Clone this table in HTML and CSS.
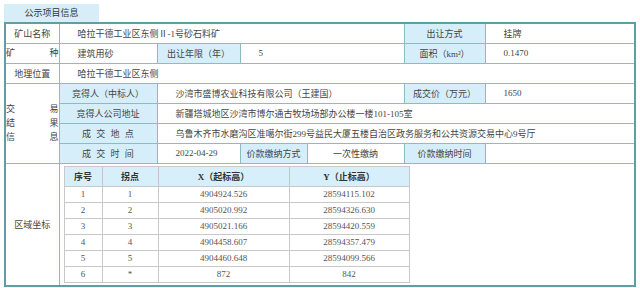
FILE: index.html
```html
<!DOCTYPE html>
<html lang="zh-CN">
<head>
    <meta charset="UTF-8">
    <title>公示项目信息</title>
    <link rel="stylesheet" href="styles.css">
</head>
<body>
    <div class="tab">公示项目信息</div>
    <table class="info">
        <colgroup>
            <col style="width: 54px">
            <col style="width: 98px">
            <col style="width: 83px">
            <col style="width: 67px">
            <col style="width: 97px">
            <col style="width: 81px">
            <col style="width: 150px">
        </colgroup>
        <tr>
            <td class="label">矿山名称</td>
            <td class="val" colspan="4">哈拉干德工业区东侧Ⅱ-1号砂石料矿</td>
            <td class="head">出让方式</td>
            <td class="val">挂牌</td>
        </tr>
        <tr>
            <td class="label spread"><div class="line"><span>矿</span><span>种</span></div></td>
            <td class="val">建筑用砂</td>
            <td class="head">出让年限（年）</td>
            <td class="val" colspan="2">5</td>
            <td class="head">面积（km²）</td>
            <td class="val">0.1470</td>
        </tr>
        <tr>
            <td class="label">地理位置</td>
            <td class="val" colspan="6">哈拉干德工业区东侧</td>
        </tr>
        <tr>
            <td class="label spread" rowspan="4">
                <div class="line"><span>交</span><span>易</span></div>
                <div class="line"><span>结</span><span>果</span></div>
                <div class="line"><span>信</span><span>息</span></div>
            </td>
            <td class="head">竞得人（中标人）</td>
            <td class="val" colspan="3">沙湾市盛博农业科技有限公司（王建国）</td>
            <td class="head">成交价（万元）</td>
            <td class="val">1650</td>
        </tr>
        <tr>
            <td class="head">竞得人公司地址</td>
            <td class="val" colspan="5">新疆塔城地区沙湾市博尔通古牧场场部办公楼一楼101-105室</td>
        </tr>
        <tr>
            <td class="head wide">成 交 地 点</td>
            <td class="val" colspan="5">乌鲁木齐市水磨沟区准噶尔街299号益民大厦五楼自治区政务服务和公共资源交易中心9号厅</td>
        </tr>
        <tr>
            <td class="head wide">成 交 时 间</td>
            <td class="val">2022-04-29</td>
            <td class="head">价款缴纳方式</td>
            <td class="label">一次性缴纳</td>
            <td class="head">价款缴纳时间</td>
            <td class="val"></td>
        </tr>
        <tr class="area">
            <td class="label">区域坐标</td>
            <td class="inner-cell" colspan="6">
                <table class="coords">
                    <colgroup>
                        <col style="width: 38px">
                        <col style="width: 56px">
                        <col style="width: 131px">
                        <col style="width: 120px">
                    </colgroup>
                    <tr>
                        <th>序号</th>
                        <th>拐点</th>
                        <th>X（起标高）</th>
                        <th>Y（止标高）</th>
                    </tr>
                    <tr><td>1</td><td>1</td><td>4904924.526</td><td>28594115.102</td></tr>
                    <tr><td>2</td><td>2</td><td>4905020.992</td><td>28594326.630</td></tr>
                    <tr><td>3</td><td>3</td><td>4905021.166</td><td>28594420.559</td></tr>
                    <tr><td>4</td><td>4</td><td>4904458.607</td><td>28594357.479</td></tr>
                    <tr><td>5</td><td>5</td><td>4904460.648</td><td>28594099.566</td></tr>
                    <tr><td>6</td><td>*</td><td>872</td><td>842</td></tr>
                </table>
            </td>
        </tr>
    </table>
</body>
</html>
```

FILE: styles.css
```css
* {
    box-sizing: border-box;
}
body {
    margin: 4px;
    background: #fff;
    font-family: "Liberation Serif", "Noto Sans CJK SC", serif;
    font-size: 9px;
    color: #444;
}
.tab {
    width: 95px;
    height: 18px;
    line-height: 18px;
    text-align: center;
    background: #d7eef9;
    color: #333;
}
.info {
    width: 630px;
    table-layout: fixed;
    border-collapse: collapse;
    border: 2px solid #5f9ea4;
}
.info > tbody > tr > td {
    height: 20px;
    padding: 0;
    border: 1px solid #8cbcc0;
    white-space: nowrap;
    overflow: hidden;
}
.info .label {
    text-align: center;
    background: #fff;
}
.info .head {
    text-align: center;
    background: #d6eefa;
    color: #444;
}
.info .wide {
    word-spacing: 3px;
}
.info .val {
    padding-left: 18px;
}
.spread .line {
    display: flex;
    justify-content: space-between;
    line-height: 14px;
}
.info .area > td {
    height: 123px;
}
.info .inner-cell {
    vertical-align: top;
    padding: 2px 0 0 4px;
}
.coords {
    width: 345px;
    table-layout: fixed;
    border-collapse: collapse;
    border: 1px solid #bbb;
}
.coords th,
.coords td {
    border: 1px solid #c8c8c8;
    text-align: center;
    padding: 0;
}
.coords th {
    height: 20px;
    background: #d7effb;
    color: #333;
    font-weight: bold;
}
.coords td {
    height: 16px;
    color: #555;
}
```
